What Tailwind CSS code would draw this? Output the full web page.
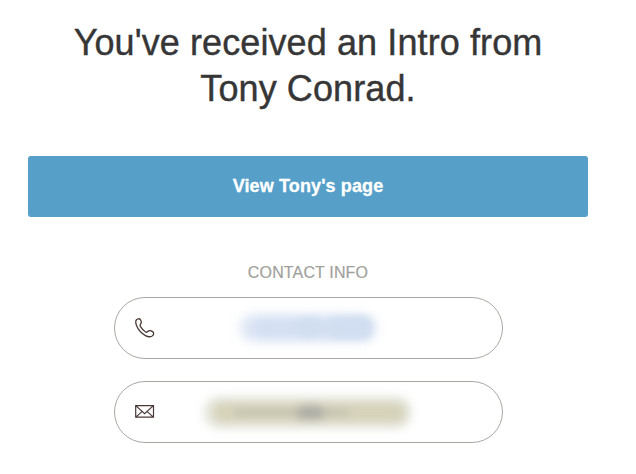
<!DOCTYPE html>
<html lang="en">
<head>
<meta charset="utf-8">
<title>Intro</title>
<script src="https://cdn.jsdelivr.net/npm/@tailwindcss/browser@4"></script>
</head>
<body class="h-[474px] overflow-hidden bg-white font-['Liberation_Sans',Arial,sans-serif]">
<main class="ml-7 flex w-[560px] flex-col items-center pt-5">
  <h1 class="text-center text-[36px] leading-[46px] tracking-[0.1px] whitespace-nowrap text-[#363636] [-webkit-text-stroke:0.4px_#363636]"><span class="block">You've received an Intro from</span><span class="block">Tony Conrad.</span></h1>
  <a class="mt-11 flex h-[61px] w-full items-center justify-center rounded-[3px] bg-[#559fc9] text-[18px] font-bold tracking-[0.13px] text-white [-webkit-text-stroke:0.3px_#fff]"><span>View Tony's page</span></a>
  <h2 class="mt-[46px] h-[20px] text-[16px] leading-[20px] tracking-[0.15px] text-[#a0a09c] [-webkit-text-stroke:0.2px_#a0a09c]">CONTACT INFO</h2>
  <div class="mt-[14px] flex h-[62px] w-[389px] items-center rounded-full border border-[#a8a8a3] pl-5">
    <svg class="size-5 shrink-0" viewBox="0 0 20 20" fill="none" stroke="#493a36" stroke-width="1.3" stroke-linejoin="round"><path d="M1.2 2.1C2.2.5 4.700.3 5.500 1.700C6.300 3.200 6.500 5.200 5.500 6.200C4.700 7 5 7.800 5.700 8.900C7 11 8.800 13 10.600 14C11.400 14.500 12.100 14.300 12.600 13.600C13.600 12.300 16 12.500 17.600 13.600C19.200 14.700 18.800 17 17.200 18C15.400 19 12.700 18.900 10.500 17.600C6.500 15.300 3 11.300 1.400 7.200C.7 5.300.5 3.400 1.200 2.100Z"/></svg>
    <div class="relative ml-[78px] h-[24px] w-[150px]">
      <div class="absolute top-[-1px] left-[7px] h-[26px] w-[136px] rounded-full bg-[#dbe5f4] blur-[6px]"></div>
      <div class="absolute top-[4px] left-[22px] h-[16px] w-[114px] rounded-full bg-[#d3dff1] blur-[5px]"></div>
      <div class="absolute top-[1px] left-[96px] h-[21px] w-[42px] rounded-lg bg-[#d1def1] blur-[3px]"></div>
      <div class="absolute top-[2px] left-[65px] h-[18px] w-[22px] rounded-lg bg-[#d1def1] blur-[3px]"></div>
    </div>
  </div>
  <div class="mt-[22px] flex h-[62px] w-[389px] items-center rounded-full border border-[#a8a8a3] pl-5">
    <svg class="size-5 shrink-0" viewBox="0 0 20 20" fill="none" stroke="#493a36" stroke-width="1.2"><path d="M.7 3.600H18.500V15.200H.7ZM.8 3.600L9.600 11.600L18.400 3.600M.8 15.100L7 9.600M18.400 15.100L12.200 9.600"/></svg>
    <div class="relative ml-[43px] h-[30px] w-[220px]">
      <div class="absolute top-[-1px] left-[5px] h-[33px] w-[209px] rounded-full bg-[#e8e8df] blur-[5px]"></div>
      <div class="absolute top-[6px] left-[15px] h-[19px] w-[192px] rounded-lg bg-[#d5d2b9] blur-[4px]"></div>
      <div class="absolute top-[11px] left-[36px] h-[9px] w-[115px] rounded-full bg-[#a8a8a3]/25 blur-[3px]"></div>
      <div class="absolute top-[9px] left-[99px] h-[13px] w-[27px] rounded-full bg-[#a0a0a0]/65 blur-[4px]"></div>
    </div>
  </div>
</main>
</body>
</html>
